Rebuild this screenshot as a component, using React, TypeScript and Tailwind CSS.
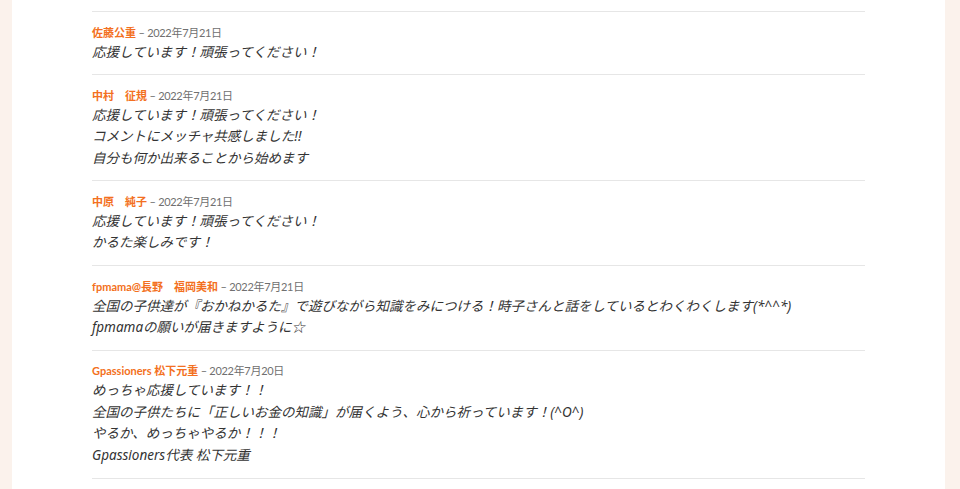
import React from 'react';

type Comment = {
  author: string;
  date: string;
  lines: string[];
};

const comments: Comment[] = [
  {
    author: '佐藤公重',
    date: '2022年7月21日',
    lines: ['応援しています！頑張ってください！'],
  },
  {
    author: '中村　征規',
    date: '2022年7月21日',
    lines: ['応援しています！頑張ってください！', 'コメントにメッチャ共感しました!!', '自分も何か出来ることから始めます'],
  },
  {
    author: '中原　純子',
    date: '2022年7月21日',
    lines: ['応援しています！頑張ってください！', 'かるた楽しみです！'],
  },
  {
    author: 'fpmama@長野　福岡美和',
    date: '2022年7月21日',
    lines: [
      '全国の子供達が『おかねかるた』で遊びながら知識をみにつける！時子さんと話をしているとわくわくします(*^^*)',
      'fpmamaの願いが届きますように☆',
    ],
  },
  {
    author: 'Gpassioners 松下元重',
    date: '2022年7月20日',
    lines: [
      'めっちゃ応援しています！！',
      '全国の子供たちに「正しいお金の知識」が届くよう、心から祈っています！(^O^)',
      'やるか、めっちゃやるか！！！',
      'Gpassioners代表 松下元重',
    ],
  },
];

const CommentItem: React.FC<{ comment: Comment }> = ({ comment }) => (
  <li className="border-t border-[#e6e6e6] pt-[11.5px] pb-[11px]">
    <div className="h-[18px] leading-[18px] text-[11px] font-['Lato','Noto_Sans_CJK_JP',sans-serif]">
      <span className="font-bold text-[#f37021]">{comment.author}</span>
      <span className="text-[#707070] tracking-[-0.3px]"> – {comment.date}</span>
    </div>
    <div className="text-[13.5px] leading-[21.6px] italic text-[#333333] font-['Noto_Sans','Noto_Sans_CJK_JP',sans-serif]">
      {comment.lines.map((line, i) => (
        <p key={i}>{line}</p>
      ))}
    </div>
  </li>
);

const App: React.FC = () => {
  return (
    <div className="h-[489px] w-full bg-[#fbf2ec] pl-[12px] pr-[15px] overflow-hidden">
      <div className="h-full bg-white pl-[80px] pr-[80px] pt-[11px]">
        <ul className="border-b border-[#e6e6e6]">
          {comments.map((c, i) => (
            <CommentItem key={i} comment={c} />
          ))}
        </ul>
      </div>
    </div>
  );
};

export default App;
